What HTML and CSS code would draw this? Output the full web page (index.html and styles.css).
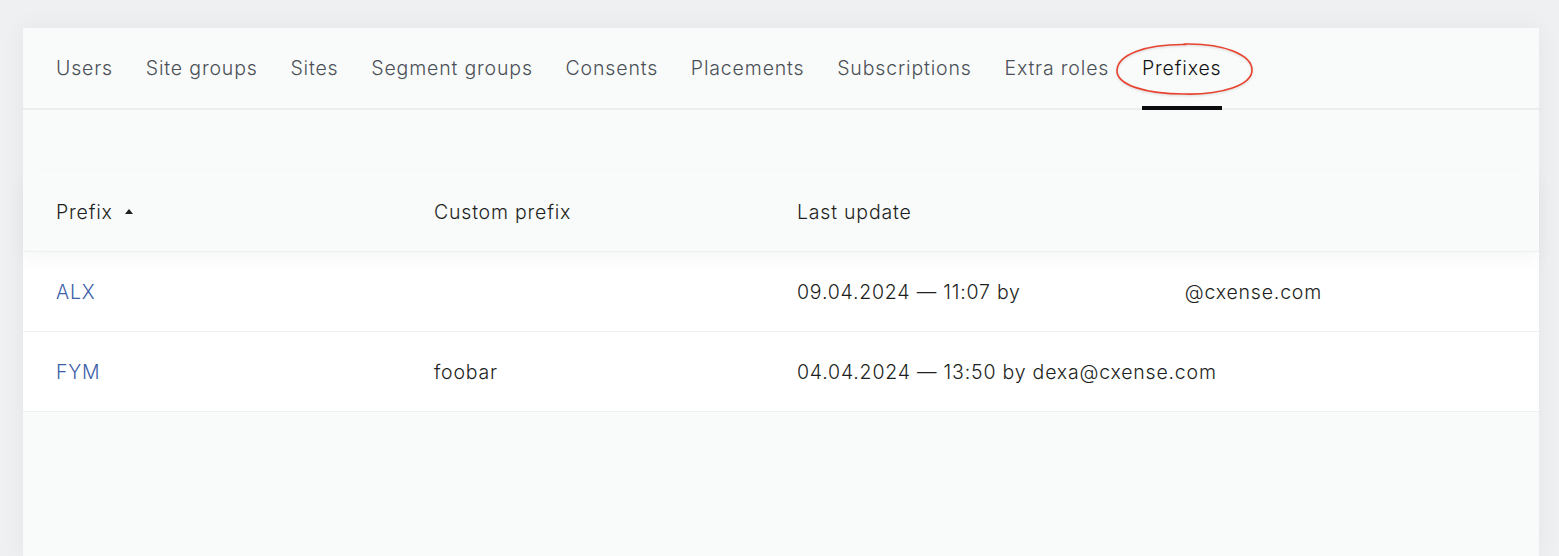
FILE: index.html
```html
<!DOCTYPE html>
<html lang="en">
<head>
<meta charset="utf-8">
<title>Prefixes</title>
<link rel="stylesheet" href="styles.css">
</head>
<body>
<div class="page">
  <div class="panel">
    <nav class="tabs">
      <a class="tab">Users</a>
      <a class="tab">Site groups</a>
      <a class="tab">Sites</a>
      <a class="tab">Segment groups</a>
      <a class="tab">Consents</a>
      <a class="tab">Placements</a>
      <a class="tab">Subscriptions</a>
      <a class="tab">Extra roles</a>
      <a class="tab active">Prefixes
        <svg class="circle" width="140" height="56" viewBox="0 0 140 56" aria-hidden="true">
          <path d="M70 3 C110 2 138 14 138 29 C138 44 108 54 70 53 C32 53 2 44 3 29 C4 14 30 3 72 3.5" fill="none" stroke="#e8432e" stroke-width="1.6" stroke-linecap="round"/>
        </svg>
      </a>
    </nav>
    <div class="content">
      <div class="table">
        <div class="row head">
          <div class="cell">Prefix <span class="sort"></span></div>
          <div class="cell">Custom prefix</div>
          <div class="cell">Last update</div>
        </div>
        <div class="row">
          <div class="cell"><a class="link">ALX</a></div>
          <div class="cell"></div>
          <div class="cell">09.04.2024 — 11:07 by<span class="redact"></span>@cxense.com</div>
        </div>
        <div class="row">
          <div class="cell"><a class="link">FYM</a></div>
          <div class="cell">foobar</div>
          <div class="cell">04.04.2024 — 13:50 by dexa@cxense.com</div>
        </div>
      </div>
    </div>
  </div>
</div>
</body>
</html>
```

FILE: styles.css
```css
html, body {
  margin: 0;
  padding: 0;
  height: 100%;
}
body {
  background: #eff0f2;
  font-family: Inter, "Noto Sans", sans-serif;
  color: #1d1f22;
  overflow: hidden;
}
.page {
  padding: 28px 20px 0 23px;
  height: 100%;
  box-sizing: border-box;
}
.panel {
  width: 1516px;
  height: 100%;
  background: #f9fbfa;
  box-shadow: 0 0 24px rgba(0, 0, 0, 0.05);
  display: flex;
  flex-direction: column;
}
.tabs {
  display: flex;
  gap: 32.7px;
  padding-left: 33px;
  height: 80px;
  border-bottom: 2px solid #eceeee;
}
.tab {
  position: relative;
  display: flex;
  align-items: center;
  font-size: 19.5px;
  font-weight: 350;
  color: #4b5057;
  letter-spacing: 0.85px;
  white-space: nowrap;
}
.tab.active {
  color: #111214;
}
.tab.active::after {
  content: "";
  position: absolute;
  left: 0;
  right: 0;
  bottom: -2px;
  height: 4px;
  background: #0b0c0d;
}
.circle {
  position: absolute;
  left: -28px;
  top: 13px;
  filter: drop-shadow(0 1px 1px rgba(0,0,0,0.15));
}
.content {
  padding-top: 62px;
}
.row {
  display: grid;
  grid-template-columns: 378px 363px 1fr;
  padding-left: 33px;
  height: 79px;
  align-items: center;
  border-bottom: 1px solid #eef0ef;
  background: #ffffff;
  font-size: 19.5px;
  font-weight: 350;
  letter-spacing: 0.8px;
}
.row.head {
  background: #f9fbfa;
  position: relative;
  box-shadow: 0 8px 18px rgba(0, 0, 0, 0.035);
  z-index: 1;
}
.cell {
  display: flex;
  align-items: center;
  white-space: nowrap;
}
.sort {
  display: inline-block;
  margin-left: 12px;
  width: 0;
  height: 0;
  border-left: 4px solid transparent;
  border-right: 4px solid transparent;
  border-bottom: 5px solid #1d1f22;
}
.link {
  color: #3b5ea8;
}
.redact {
  display: inline-block;
  width: 164px;
  height: 1px;
}
```
